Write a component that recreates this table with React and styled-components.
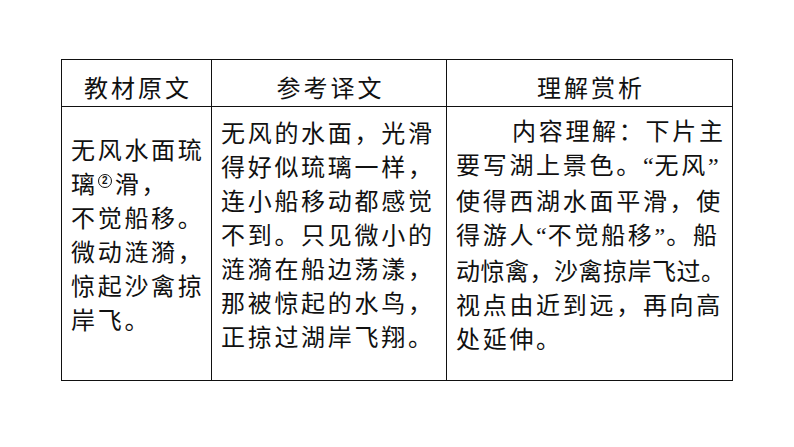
import React from 'react';
import styled, { createGlobalStyle } from 'styled-components';

const GlobalStyle = createGlobalStyle`
  html, body {
    margin: 0;
    padding: 0;
    background: #fff;
  }
  body {
    font-family: "Noto Sans CJK SC", "Liberation Sans", sans-serif;
    color: #111;
  }
`;

const Page = styled.div`
  width: 794px;
  height: 447px;
  padding: 59px 0 0 61px;
  box-sizing: border-box;
`;

const Table = styled.div`
  display: grid;
  grid-template-columns: 150px 235px 286px;
  grid-template-rows: 47px 274px;
  border-top: 1.5px solid #111;
  border-left: 1.5px solid #111;
  width: max-content;
`;

const Cell = styled.div`
  box-sizing: border-box;
  border-right: 1.5px solid #111;
  border-bottom: 1.5px solid #111;
`;

const HeadCell = styled(Cell)`
  display: flex;
  align-items: center;
  justify-content: center;
  padding: 8px 0 0 3px;
  font-size: 24px;
  line-height: 34px;
  letter-spacing: 3px;
`;

const BodyCell = styled(Cell)`
  display: flex;
  flex-direction: column;
  justify-content: center;
  padding: 0 6px 20px 9px;
  font-size: 24px;
  line-height: 34px;
`;

const Line = styled.div`
  white-space: nowrap;
  letter-spacing: ${(p) => (p.$tight ? '0.5px' : '2.7px')};
  text-indent: ${(p) => (p.$indent ? '56px' : '0')};
`;

const Quote = styled.span`
  font-family: "Liberation Serif", serif;
  letter-spacing: 1px;
`;

// circled footnote mark, drawn as a small ring with a digit
const Note = styled.span`
  display: inline-flex;
  align-items: center;
  justify-content: center;
  box-sizing: border-box;
  width: 14px;
  height: 14px;
  margin: 0 3px 0 0;
  border: 1.4px solid #111;
  border-radius: 50%;
  font-family: "Liberation Sans", sans-serif;
  font-size: 10px;
  font-weight: bold;
  line-height: 1;
  letter-spacing: 0;
  text-indent: 0;
  vertical-align: 9px;
`;

const original = [
  '无风水面琉',
  <>璃<Note>2</Note>滑，</>,
  '不觉船移。',
  '微动涟漪，',
  '惊起沙禽掠',
  '岸飞。',
];

const translation = [
  '无风的水面，光滑',
  '得好似琉璃一样，',
  '连小船移动都感觉',
  '不到。只见微小的',
  '涟漪在船边荡漾，',
  '那被惊起的水鸟，',
  '正掠过湖岸飞翔。',
];

const analysis = [
  { text: '内容理解：下片主', indent: true },
  { text: <>要写湖上景色。<Quote>“</Quote>无风<Quote>”</Quote></> },
  { text: '使得西湖水面平滑，使' },
  { text: <>得游人<Quote>“</Quote>不觉船移<Quote>”</Quote>。船</> },
  { text: '动惊禽，沙禽掠岸飞过。', tight: true },
  { text: '视点由近到远，再向高' },
  { text: '处延伸。' },
];

export default function App() {
  return (
    <Page>
      <GlobalStyle />
      <Table>
        <HeadCell>教材原文</HeadCell>
        <HeadCell>参考译文</HeadCell>
        <HeadCell>理解赏析</HeadCell>
        <BodyCell>
          {original.map((l, i) => (
            <Line key={i}>{l}</Line>
          ))}
        </BodyCell>
        <BodyCell>
          {translation.map((l, i) => (
            <Line key={i}>{l}</Line>
          ))}
        </BodyCell>
        <BodyCell>
          {analysis.map((l, i) => (
            <Line key={i} $indent={l.indent} $tight={l.tight}>
              {l.text}
            </Line>
          ))}
        </BodyCell>
      </Table>
    </Page>
  );
}
